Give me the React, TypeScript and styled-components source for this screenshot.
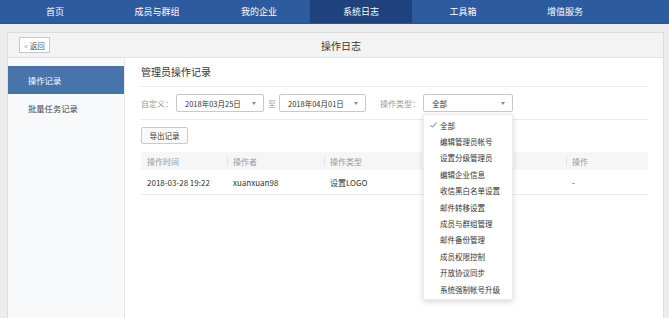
import styled, { createGlobalStyle } from "styled-components";

const GlobalStyle = createGlobalStyle`
  html, body {
    margin: 0;
    padding: 0;
    background: #ececec;
    overflow: hidden;
  }
  body {
    font-family: "Noto Sans CJK SC", "Noto Sans", sans-serif;
    color: #333;
  }
`;

const tabs = ["首页", "成员与群组", "我的企业", "系统日志", "工具箱", "增值服务"];

const types = [
  "全部",
  "编辑管理员帐号",
  "设置分级管理员",
  "编辑企业信息",
  "收信黑白名单设置",
  "邮件转移设置",
  "成员与群组管理",
  "邮件备份管理",
  "成员权限控制",
  "开放协议同步",
  "系统强制帐号升级",
];

const Nav = styled.div`
  height: 24px;
  background: #2d5ba0;
  display: flex;
  padding-left: 4px;
  border-bottom: 1px solid #2a5494;
  box-sizing: border-box;
`;

const Tab = styled.div<{ $active?: boolean }>`
  width: 102px;
  height: 100%;
  display: flex;
  align-items: center;
  justify-content: center;
  font-size: 9px;
  color: #fff;
  background: ${(p) => (p.$active ? "#1d427d" : "transparent")};
`;

const Page = styled.div`
  padding: 8px 5px 0 7px;
`;

const Panel = styled.div`
  background: #fff;
  border: 1px solid #dcdcdc;
  border-bottom: none;
  height: 285px;
  display: flex;
  flex-direction: column;
`;

const Header = styled.div`
  height: 24px;
  background: #f3f3f3;
  border-bottom: 1px solid #dde3ea;
  display: grid;
  grid-template-columns: 1fr auto 1fr;
  align-items: center;
  padding-left: 11px;
  flex-shrink: 0;
`;

const BackButton = styled.div`
  justify-self: start;
  height: 16px;
  width: 31px;
  box-sizing: border-box;
  border: 1px solid #c8c8c8;
  background: #fff;
  font-size: 7.5px;
  color: #555;
  display: flex;
  align-items: center;
  justify-content: center;
  gap: 2px;

  span {
    color: #999;
  }
`;

const Title = styled.div`
  font-size: 10px;
  color: #333;
`;

const Body = styled.div`
  flex: 1;
  display: flex;
`;

const Sidebar = styled.div`
  width: 116px;
  background: #f8f9fb;
  border-right: 1px solid #e6e8ec;
  padding-top: 8px;
`;

const SideItem = styled.div<{ $active?: boolean }>`
  height: 28px;
  display: flex;
  align-items: center;
  padding-left: 20px;
  font-size: 8.3px;
  color: ${(p) => (p.$active ? "#fff" : "#444")};
  background: ${(p) => (p.$active ? "#4674ab" : "transparent")};
`;

const Content = styled.div`
  flex: 1;
  padding: 5px 15px 0 16px;
`;

const SectionTitle = styled.div`
  font-size: 10px;
  line-height: 18px;
  color: #333;
  padding-bottom: 5px;
  border-bottom: 1px solid #e9e9e9;
`;

const FilterRow = styled.div`
  display: flex;
  align-items: center;
  padding: 7px 0;
  border-bottom: 1px solid #e9e9e9;
`;

const Label = styled.span<{ $gap?: number }>`
  font-size: 8px;
  color: #999;
  margin-left: ${(p) => p.$gap ?? 0}px;
  margin-right: 3px;
`;

const SelectWrap = styled.div`
  position: relative;
`;

const Select = styled.div<{ $width: number }>`
  width: ${(p) => p.$width}px;
  height: 18px;
  box-sizing: border-box;
  border: 1px solid #c9c9c9;
  border-radius: 2px;
  background: #fff;
  display: flex;
  align-items: center;
  justify-content: space-between;
  padding: 0 7px 0 8px;
  font-size: 7.5px;
  color: #333;

  &::after {
    content: "";
    border-left: 2.5px solid transparent;
    border-right: 2.5px solid transparent;
    border-top: 3px solid #888;
  }
`;

const Menu = styled.div`
  position: absolute;
  top: calc(100% + 2px);
  left: 0;
  width: 90px;
  background: #fff;
  box-sizing: border-box;
  border: 1px solid #ececec;
  box-shadow: 0 2px 6px rgba(0, 0, 0, 0.15);
  padding: 2px 0;
  z-index: 10;
`;

const MenuItem = styled.div`
  height: 16.4px;
  display: flex;
  align-items: center;
  padding-left: 16px;
  position: relative;
  font-size: 7.5px;
  color: #333;

  svg {
    position: absolute;
    left: 6px;
    top: 5px;
  }
`;

const ExportButton = styled.div`
  margin-top: 7px;
  width: 47px;
  height: 17px;
  box-sizing: border-box;
  border: 1px solid #c9c9c9;
  border-radius: 2px;
  background: #fafafa;
  font-size: 7.5px;
  color: #333;
  display: flex;
  align-items: center;
  justify-content: center;
`;

const Table = styled.div`
  margin-top: 8px;
`;

const Row = styled.div<{ $head?: boolean }>`
  display: grid;
  grid-template-columns: 86px 97px 121px 121px 1fr;
  height: ${(p) => (p.$head ? 18 : 24)}px;
  background: ${(p) => (p.$head ? "#f5f6f7" : "#fff")};
  border-bottom: ${(p) => (p.$head ? "none" : "1px solid #e9e9e9")};
`;

const Cell = styled.div<{ $head?: boolean; $divider?: boolean }>`
  display: flex;
  align-items: center;
  padding-left: 6px;
  font-size: 8px;
  color: ${(p) => (p.$head ? "#999" : "#333")};
  position: relative;

  &::before {
    content: "";
    display: ${(p) => (p.$divider ? "block" : "none")};
    position: absolute;
    left: 0;
    top: 4px;
    bottom: 4px;
    width: 1px;
    background: #e2e2e2;
  }
`;

const Check = () => (
  <svg width="7" height="6" viewBox="0 0 7 6">
    <polyline points="0.5,3.2 2.5,5.2 6.5,0.6" fill="none" stroke="#3d6db0" strokeWidth="0.9" />
  </svg>
);

export default function App() {
  const head = ["操作时间", "操作者", "操作类型", "", "操作"];
  const row = ["2018-03-28 19:22", "xuanxuan98", "设置LOGO", "", "-"];
  return (
    <>
      <GlobalStyle />
      <Nav>
        {tabs.map((t) => (
          <Tab key={t} $active={t === "系统日志"}>
            {t}
          </Tab>
        ))}
      </Nav>
      <Page>
        <Panel>
          <Header>
            <BackButton>
              <span>«</span>返回
            </BackButton>
            <Title>操作日志</Title>
            <div />
          </Header>
          <Body>
            <Sidebar>
              <SideItem $active>操作记录</SideItem>
              <SideItem>批量任务记录</SideItem>
            </Sidebar>
            <Content>
              <SectionTitle>管理员操作记录</SectionTitle>
              <FilterRow>
                <Label>自定义：</Label>
                <Select $width={88}>2018年03月25日</Select>
                <Label $gap={4}>至</Label>
                <Select $width={87}>2018年04月01日</Select>
                <Label $gap={14}>操作类型：</Label>
                <SelectWrap>
                  <Select $width={90}>全部</Select>
                  <Menu>
                    {types.map((t, i) => (
                      <MenuItem key={t}>
                        {i === 0 && <Check />}
                        {t}
                      </MenuItem>
                    ))}
                  </Menu>
                </SelectWrap>
              </FilterRow>
              <ExportButton>导出记录</ExportButton>
              <Table>
                <Row $head>
                  {head.map((h, i) => (
                    <Cell key={i} $head $divider={i > 0}>
                      {h}
                    </Cell>
                  ))}
                </Row>
                <Row>
                  {row.map((c, i) => (
                    <Cell key={i}>{c}</Cell>
                  ))}
                </Row>
              </Table>
            </Content>
          </Body>
        </Panel>
      </Page>
    </>
  );
}
